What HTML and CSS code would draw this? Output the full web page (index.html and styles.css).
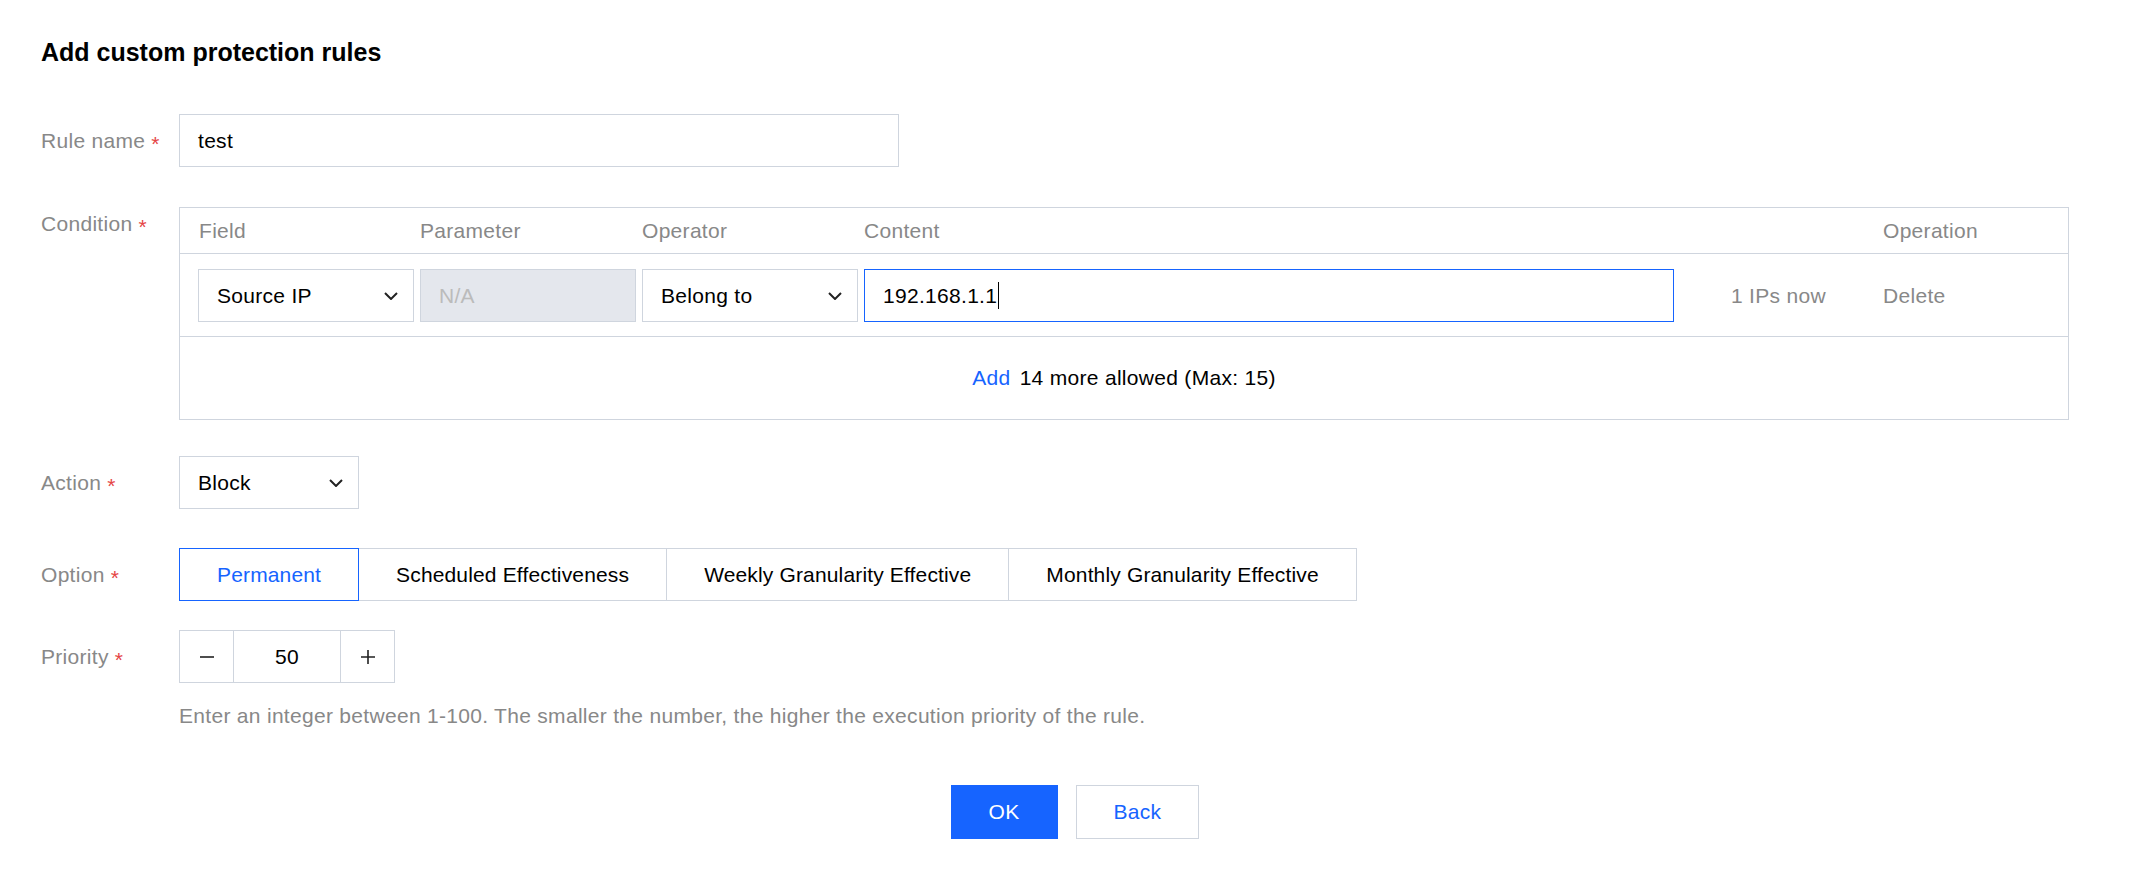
FILE: index.html
```html
<!DOCTYPE html>
<html lang="en">
<head>
    <meta charset="utf-8">
    <title>Add custom protection rules</title>
    <link rel="stylesheet" href="styles.css">
</head>
<body>
    <div class="page">
        <h2 class="page-title">Add custom protection rules</h2>

        <div class="form-item item-name">
            <label class="form-label">Rule name<span class="req">*</span></label>
            <div class="form-ctrl">
                <div class="text-input name-input">test</div>
            </div>
        </div>

        <div class="form-item item-condition">
            <label class="form-label">Condition<span class="req">*</span></label>
            <div class="form-ctrl">
                <div class="cond-table">
                    <div class="cond-row cond-head">
                        <div>Field</div>
                        <div>Parameter</div>
                        <div>Operator</div>
                        <div>Content</div>
                        <div></div>
                        <div>Operation</div>
                    </div>
                    <div class="cond-row cond-body">
                        <div class="select">
                            <span>Source IP</span>
                            <svg class="chevron" width="14" height="8" viewBox="0 0 14 8"><path d="M1 1l6 6 6-6"/></svg>
                        </div>
                        <div class="text-input is-disabled">N/A</div>
                        <div class="select">
                            <span>Belong to</span>
                            <svg class="chevron" width="14" height="8" viewBox="0 0 14 8"><path d="M1 1l6 6 6-6"/></svg>
                        </div>
                        <div class="text-input is-focus">192.168.1.1<span class="caret"></span></div>
                        <div class="cond-tip">1 IPs now</div>
                        <div class="cond-op">Delete</div>
                    </div>
                    <div class="cond-foot">
                        <a class="link">Add</a> 14 more allowed (Max: 15)
                    </div>
                </div>
            </div>
        </div>

        <div class="form-item item-action">
            <label class="form-label">Action<span class="req">*</span></label>
            <div class="form-ctrl">
                <div class="select action-select">
                    <span>Block</span>
                    <svg class="chevron" width="14" height="8" viewBox="0 0 14 8"><path d="M1 1l6 6 6-6"/></svg>
                </div>
            </div>
        </div>

        <div class="form-item item-option">
            <label class="form-label">Option<span class="req">*</span></label>
            <div class="form-ctrl">
                <div class="seg">
                    <div class="seg-btn is-active">Permanent</div>
                    <div class="seg-btn">Scheduled Effectiveness</div>
                    <div class="seg-btn">Weekly Granularity Effective</div>
                    <div class="seg-btn">Monthly Granularity Effective</div>
                </div>
            </div>
        </div>

        <div class="form-item item-priority">
            <label class="form-label">Priority<span class="req">*</span></label>
            <div class="form-ctrl">
                <div class="stepper">
                    <div class="step-btn">
                        <svg width="16" height="16" viewBox="0 0 16 16"><path d="M1 8h14"/></svg>
                    </div>
                    <div class="step-val">50</div>
                    <div class="step-btn">
                        <svg width="16" height="16" viewBox="0 0 16 16"><path d="M1 8h14M8 1v14"/></svg>
                    </div>
                </div>
                <div class="hint">Enter an integer between 1-100. The smaller the number, the higher the execution priority of the rule.</div>
            </div>
        </div>

        <div class="form-actions">
            <button class="btn btn-primary">OK</button>
            <button class="btn">Back</button>
        </div>
    </div>
</body>
</html>
```

FILE: styles.css
```css
* {
    box-sizing: border-box;
}

body {
    margin: 0;
    font-family: "Liberation Sans", Arial, sans-serif;
    font-size: 21px;
    letter-spacing: 0.3px;
    color: #000;
    background: #fff;
}

.page {
    padding: 34px 41px 0;
}

.page-title {
    margin: 0 0 44px;
    font-size: 25px;
    line-height: 36px;
    font-weight: bold;
    letter-spacing: 0;
}

/* form rows */
.form-item {
    display: flex;
}
.item-name      { margin-bottom: 40px; }
.item-condition { margin-bottom: 36px; }
.item-action    { margin-bottom: 39px; }
.item-option    { margin-bottom: 29px; }

.form-label {
    width: 138px;
    flex: none;
    line-height: 53px;
    color: #888;
    white-space: nowrap;
}
.item-condition .form-label {
    line-height: 34px;
}
.req {
    color: #e54545;
    margin-left: 6px;
    line-height: 0;
    vertical-align: -3px;
}

.form-ctrl {
    display: flex;
    flex-direction: column;
}

/* inputs */
.text-input {
    height: 53px;
    line-height: 51px;
    padding: 0 18px;
    border: 1px solid #cfd5de;
    background: #fff;
    white-space: nowrap;
}
.name-input {
    width: 720px;
}
.text-input.is-disabled {
    background: #e4e7ed;
    color: #bbb;
}
.text-input.is-focus {
    border-color: #1664ff;
}
.caret {
    display: inline-block;
    width: 1px;
    height: 27px;
    margin-left: 1px;
    background: #000;
    vertical-align: -6px;
}

.select {
    display: flex;
    align-items: center;
    justify-content: space-between;
    height: 53px;
    padding: 0 15px 0 18px;
    border: 1px solid #cfd5de;
    background: #fff;
}
.chevron {
    fill: none;
    stroke: #222;
    stroke-width: 2;
}
.action-select {
    width: 180px;
}

/* condition table */
.cond-table {
    width: 1890px;
    border: 1px solid #cfd5de;
}
.cond-row {
    display: grid;
    grid-template-columns: 216px 216px 216px 810px 197px 1fr;
    column-gap: 6px;
    padding-left: 18px;
    border-bottom: 1px solid #cfd5de;
}
.cond-head {
    line-height: 45px;
    color: #888;
}
.cond-head div:first-child {
    padding-left: 1px;
}
.cond-body {
    padding-top: 15px;
    padding-bottom: 14px;
    align-items: center;
}
.cond-tip {
    padding-left: 51px;
    color: #888;
}
.cond-op {
    color: #888;
}
.cond-foot {
    height: 82px;
    line-height: 82px;
    text-align: center;
}
.link {
    color: #1664ff;
    margin-right: 3px;
}

/* segmented option */
.seg {
    display: flex;
    letter-spacing: 0.15px;
}
.seg-btn {
    height: 53px;
    line-height: 51px;
    padding: 0 37px;
    border: 1px solid #cfd5de;
    white-space: nowrap;
}
.seg-btn + .seg-btn {
    margin-left: -1px;
}
.seg-btn.is-active {
    position: relative;
    border-color: #1664ff;
    color: #1664ff;
}

/* priority stepper */
.stepper {
    display: flex;
    height: 53px;
}
.step-btn,
.step-val {
    display: flex;
    align-items: center;
    justify-content: center;
    border: 1px solid #cfd5de;
}
.step-btn {
    width: 55px;
}
.step-btn svg {
    fill: none;
    stroke: #222;
    stroke-width: 1.6;
}
.step-val {
    width: 108px;
    margin: 0 -1px;
}
.hint {
    margin-top: 18px;
    line-height: 30px;
    color: #888;
}

/* bottom buttons */
.form-actions {
    display: flex;
    justify-content: center;
    gap: 18px;
    margin-top: 54px;
    padding-left: 12px;
}
.btn {
    height: 54px;
    padding: 0 37px;
    border: 1px solid #cfd5de;
    background: #fff;
    color: #1664ff;
    font-family: inherit;
    font-size: 21px;
    letter-spacing: inherit;
}
.btn-primary {
    background: #1664ff;
    border-color: #1664ff;
    color: #fff;
}
```
